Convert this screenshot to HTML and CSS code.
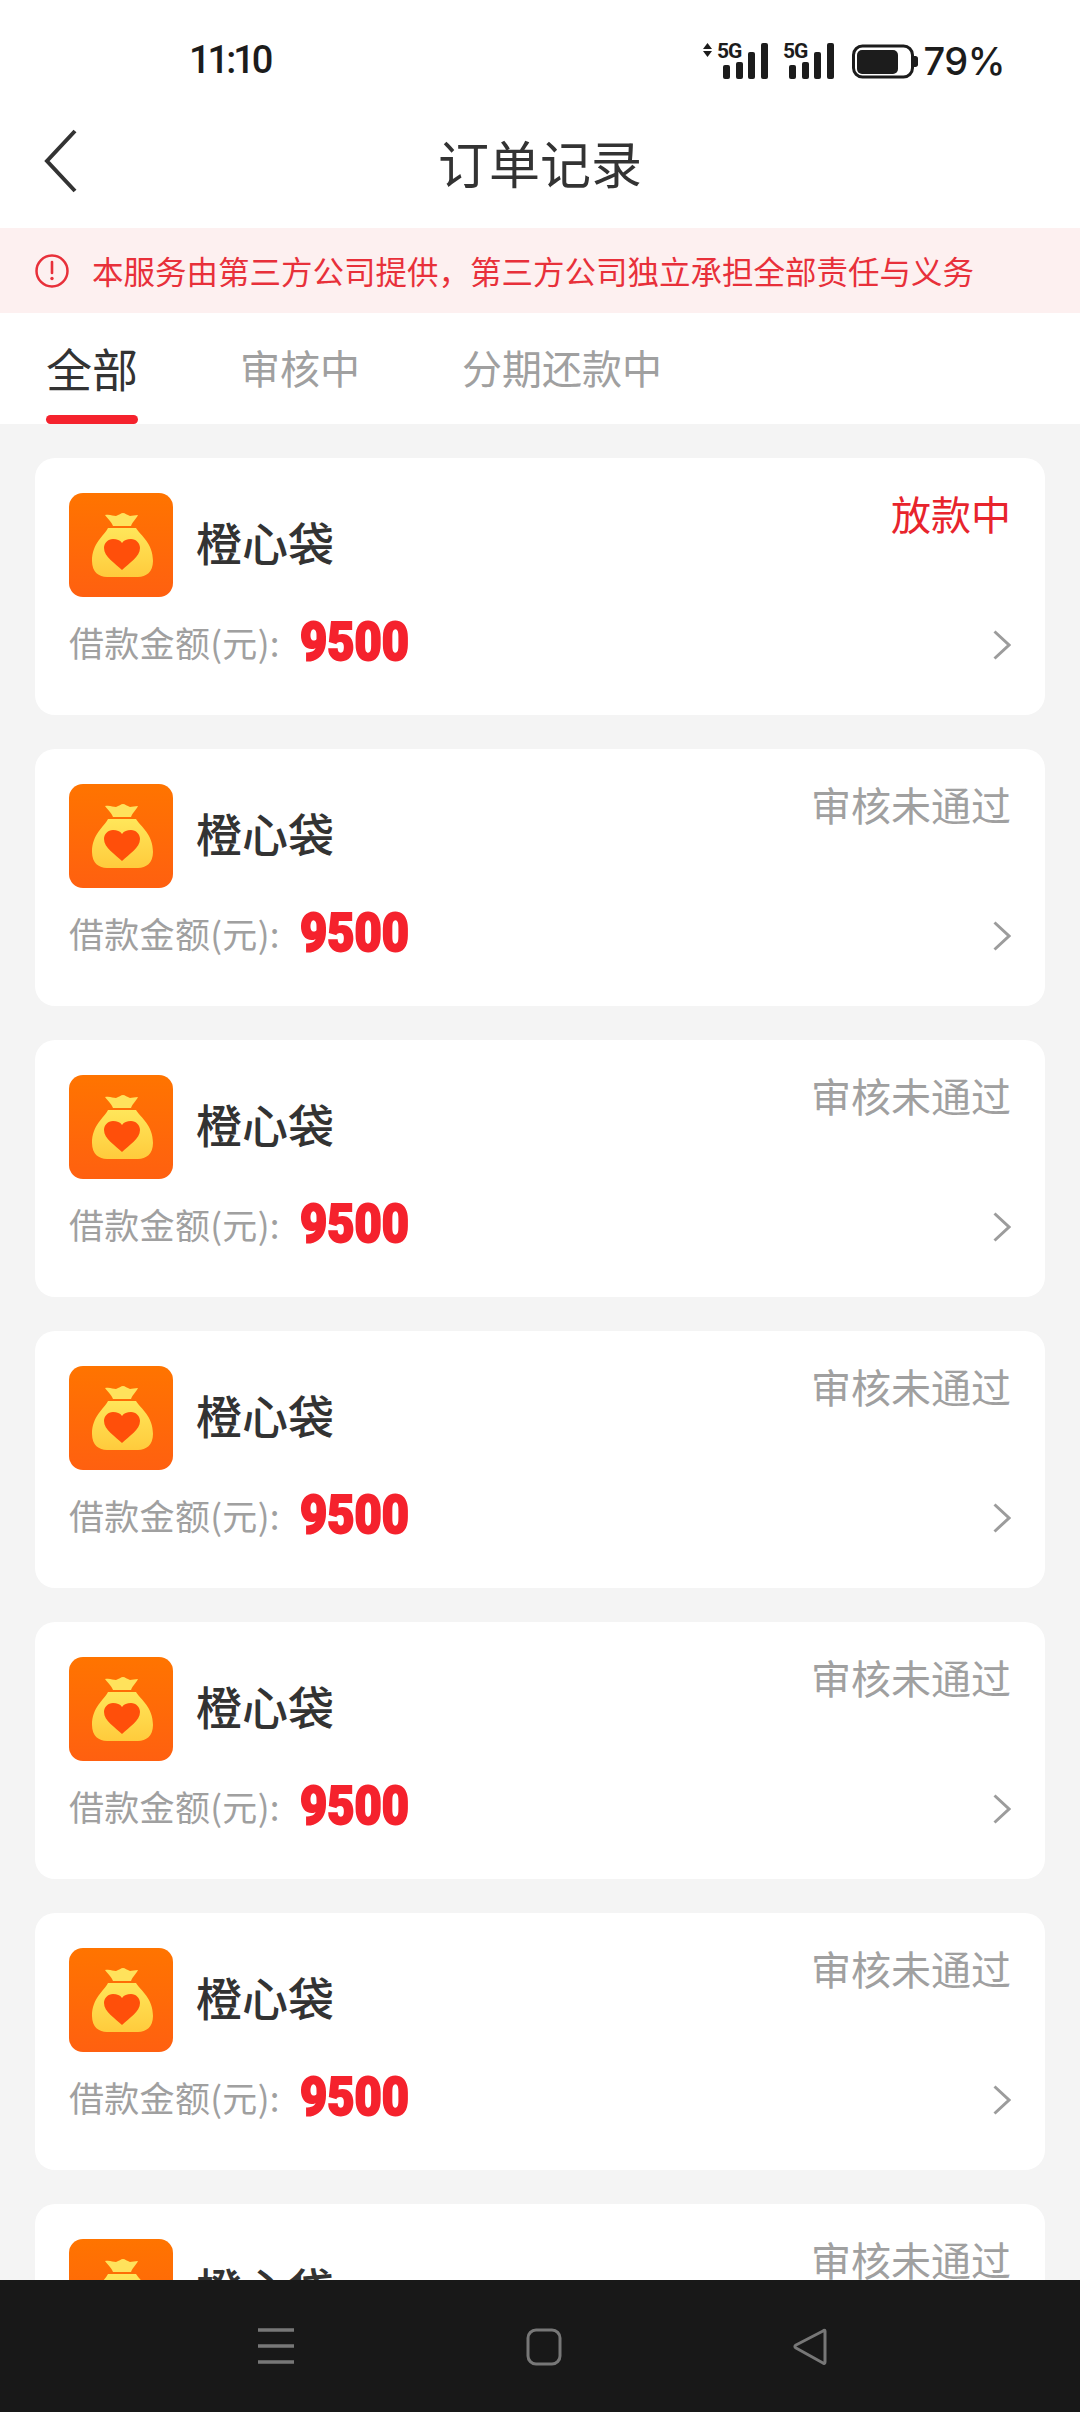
FILE: index.html
```html
<!DOCTYPE html>
<html lang="zh-CN">
<head>
    <meta charset="UTF-8">
    <meta name="viewport" content="width=device-width, initial-scale=1.0">
    <title>订单记录</title>
    <link rel="stylesheet" href="styles.css">
</head>
<body>
    <svg class="defs" width="0" height="0">
        <defs>
            <linearGradient id="bg-grad" x1="0" y1="0" x2="0" y2="1">
                <stop offset="0" stop-color="#ff7400"/>
                <stop offset="1" stop-color="#ff6010"/>
            </linearGradient>
            <linearGradient id="bag-grad" x1="0" y1="0" x2="0" y2="1">
                <stop offset="0" stop-color="#ffe65a"/>
                <stop offset="1" stop-color="#ffcb3c"/>
            </linearGradient>
            <symbol id="bag" viewBox="0 0 104 104">
                <rect width="104" height="104" rx="14" fill="url(#bg-grad)"/>
                <path d="M36 22c5-1 8 1 11 1 3-1 5-3 7-3s4 2 7 3c2 0 5-1 8-1-2 4-5 6-7 11H44c-2-5-5-7-8-11z" fill="#ffe25c"/>
                <path d="M39 35h28c5 8 17 15 17 33 0 11-7 16-15 16H38c-8 0-15-5-15-16 0-18 12-25 16-33z" fill="url(#bag-grad)"/>
                <path d="M53 77C46 70 35 64 35 55c0-5 4-9 9-9 4 0 7 1 9 4 2-3 5-4 9-4 5 0 9 4 9 9 0 9-11 15-18 22z" fill="#ff4f0a"/>
            </symbol>
            <symbol id="chevron" viewBox="0 0 18 30">
                <path d="M1.500 1.500L16 15 1.500 28.500" fill="none" stroke="#9c9c9c" stroke-width="3"/>
            </symbol>
        </defs>
    </svg>

    <div class="phone">
        <!-- barra de estado -->
        <div class="statusbar">
            <span class="time">11:10</span>
            <div class="status-right">
                <svg class="signal" width="220" height="42" viewBox="0 0 220 42">
                    <polygon points="3,6 7.500,0 12,6" fill="#1c1c1c" transform="translate(0,3)"/>
                    <polygon points="3,10 7.500,16 12,10" fill="#1c1c1c" transform="translate(0,1)"/>
                    <text class="g5" x="17" y="18">5G</text>
                    <rect x="23" y="25" width="7" height="14" rx="2" fill="#1c1c1c"/>
                    <rect x="36" y="22" width="7" height="17" rx="2" fill="#1c1c1c"/>
                    <rect x="48" y="12" width="7" height="27" rx="2" fill="#1c1c1c"/>
                    <rect x="61" y="3" width="7" height="36" rx="2" fill="#1c1c1c"/>
                    <text class="g5" x="83" y="18">5G</text>
                    <rect x="89" y="25" width="7" height="14" rx="2" fill="#1c1c1c"/>
                    <rect x="102" y="22" width="7" height="17" rx="2" fill="#1c1c1c"/>
                    <rect x="114" y="12" width="7" height="27" rx="2" fill="#1c1c1c"/>
                    <rect x="127" y="3" width="7" height="36" rx="2" fill="#1c1c1c"/>
                    <rect x="153.500" y="6" width="59" height="31" rx="9" fill="none" stroke="#1c1c1c" stroke-width="3"/>
                    <rect x="157" y="10" width="41" height="24" rx="5" fill="#1c1c1c"/>
                    <path d="M214 16h1.500c1.500 0 2.500 1 2.500 2.500v6c0 1.500-1 2.500-2.500 2.500H214z" fill="#1c1c1c"/>
                </svg>
                <span class="battery-text">79%</span>
            </div>
        </div>

        <!-- cabecera -->
        <div class="header">
            <svg class="back" width="34" height="64" viewBox="0 0 34 64">
                <path d="M31 2L3 32l28 30" fill="none" stroke="#333" stroke-width="4"/>
            </svg>
            <h1 class="title">订单记录</h1>
        </div>

        <div class="notice">
            <svg class="notice-icon" width="36" height="36" viewBox="0 0 36 36">
                <circle cx="18" cy="18" r="15.500" fill="none" stroke="#e8303a" stroke-width="2.500"/>
                <path d="M18 9v11" stroke="#e8303a" stroke-width="2.600" stroke-linecap="round"/>
                <circle cx="18" cy="25.500" r="1.700" fill="#e8303a"/>
            </svg>
            <span>本服务由第三方公司提供，第三方公司独立承担全部责任与义务</span>
        </div>

        <div class="tabs">
            <div class="tab tab-active">全部</div>
            <div class="tab">审核中</div>
            <div class="tab">分期还款中</div>
        </div>

        <!-- lista de pedidos -->
        <div class="list">
            <div class="card">
                <div class="card-head">
                    <svg class="logo"><use href="#bag"/></svg>
                    <span class="name">橙心袋</span>
                </div>
                <div class="state state-red">放款中</div>
                <div class="amount"><span class="amount-label">借款金额(元):</span><span class="amount-num">9500</span></div>
                <svg class="arrow"><use href="#chevron"/></svg>
            </div>
            <div class="card">
                <div class="card-head">
                    <svg class="logo"><use href="#bag"/></svg>
                    <span class="name">橙心袋</span>
                </div>
                <div class="state">审核未通过</div>
                <div class="amount"><span class="amount-label">借款金额(元):</span><span class="amount-num">9500</span></div>
                <svg class="arrow"><use href="#chevron"/></svg>
            </div>
            <div class="card">
                <div class="card-head">
                    <svg class="logo"><use href="#bag"/></svg>
                    <span class="name">橙心袋</span>
                </div>
                <div class="state">审核未通过</div>
                <div class="amount"><span class="amount-label">借款金额(元):</span><span class="amount-num">9500</span></div>
                <svg class="arrow"><use href="#chevron"/></svg>
            </div>
            <div class="card">
                <div class="card-head">
                    <svg class="logo"><use href="#bag"/></svg>
                    <span class="name">橙心袋</span>
                </div>
                <div class="state">审核未通过</div>
                <div class="amount"><span class="amount-label">借款金额(元):</span><span class="amount-num">9500</span></div>
                <svg class="arrow"><use href="#chevron"/></svg>
            </div>
            <div class="card">
                <div class="card-head">
                    <svg class="logo"><use href="#bag"/></svg>
                    <span class="name">橙心袋</span>
                </div>
                <div class="state">审核未通过</div>
                <div class="amount"><span class="amount-label">借款金额(元):</span><span class="amount-num">9500</span></div>
                <svg class="arrow"><use href="#chevron"/></svg>
            </div>
            <div class="card">
                <div class="card-head">
                    <svg class="logo"><use href="#bag"/></svg>
                    <span class="name">橙心袋</span>
                </div>
                <div class="state">审核未通过</div>
                <div class="amount"><span class="amount-label">借款金额(元):</span><span class="amount-num">9500</span></div>
                <svg class="arrow"><use href="#chevron"/></svg>
            </div>
            <div class="card">
                <div class="card-head">
                    <svg class="logo"><use href="#bag"/></svg>
                    <span class="name">橙心袋</span>
                </div>
                <div class="state">审核未通过</div>
                <div class="amount"><span class="amount-label">借款金额(元):</span><span class="amount-num">9500</span></div>
                <svg class="arrow"><use href="#chevron"/></svg>
            </div>
        </div>

        <!-- barra de navegacion -->
        <div class="navbar">
            <svg width="36" height="36" viewBox="0 0 36 36">
                <path d="M0 2h36M0 18h36M0 34h36" stroke="#777" stroke-width="3.500"/>
            </svg>
            <svg width="36" height="38" viewBox="0 0 36 38">
                <rect x="2" y="2" width="32" height="34" rx="8" fill="none" stroke="#777" stroke-width="3"/>
            </svg>
            <svg class="nav-back" width="36" height="38" viewBox="0 0 36 38">
                <path d="M33 3c0-1-1-1-2 0L4 17c-1.500 1-1.500 2 0 3l27 15c1 1 2 .5 2-1z" fill="none" stroke="#777" stroke-width="3" stroke-linejoin="round"/>
            </svg>
        </div>
    </div>
</body>
</html>
```

FILE: styles.css
```css
body {
    margin: 0;
    font-family: "Noto Sans CJK SC", "Noto Sans", sans-serif;
    background: #f4f4f4;
}
.defs {
    display: block;
    height: 0;
}
.phone {
    width: 1080px;
    height: 2412px;
    display: flex;
    flex-direction: column;
    overflow: hidden;
}
.statusbar {
    height: 95px;
    flex-shrink: 0;
    background: #fff;
    display: flex;
    justify-content: space-between;
    align-items: flex-start;
    padding: 0 75px 0 189px;
    box-sizing: border-box;
}
.time {
    margin-top: 36px;
    font-family: Roboto, sans-serif;
    font-size: 38px;
    line-height: 48px;
    font-weight: 500;
    letter-spacing: -3px;
    color: #1c1c1c;
}
.status-right {
    display: flex;
    align-items: flex-start;
    margin-top: 40px;
}
.signal {
    display: block;
}
.g5 {
    font-family: Roboto, sans-serif;
    font-size: 21px;
    font-weight: 700;
    letter-spacing: -1px;
    fill: #1c1c1c;
}
.battery-text {
    margin: -2px 0 0 3px;
    font-family: Inter, Roboto, sans-serif;
    font-size: 38px;
    line-height: 46px;
    font-weight: 500;
    letter-spacing: -.5px;
    color: #1c1c1c;
}
.header {
    height: 133px;
    flex-shrink: 0;
    background: #fff;
    display: grid;
    grid-template-columns: 1fr auto 1fr;
    align-items: center;
    padding: 0 44px;
    box-sizing: border-box;
}
.back {
    display: block;
    margin-top: -1px;
}
.title {
    margin: 0;
    font-size: 51px;
    line-height: 68px;
    font-weight: 400;
    color: #333;
}
.notice {
    height: 85px;
    flex-shrink: 0;
    background: #fdf0f0;
    display: flex;
    align-items: center;
    padding-left: 34px;
    font-size: 31.500px;
    line-height: 44px;
    color: #e8303a;
}
.notice span {
    margin-top: -2px;
}
.notice-icon {
    margin-right: 22px;
}
.tabs {
    height: 111px;
    flex-shrink: 0;
    background: #fff;
    display: flex;
    align-items: flex-start;
    gap: 102px;
    padding-left: 46px;
}
.tab {
    margin-top: 25px;
    font-size: 40px;
    line-height: 58px;
    color: #a0a0a0;
}
.tab-active {
    margin-top: 24px;
    height: 87px;
    display: flex;
    flex-direction: column;
    justify-content: space-between;
    font-size: 46px;
    line-height: 60px;
    color: #333;
}
.tab-active::after {
    content: "";
    height: 9px;
    border-radius: 5px;
    background: #f5222d;
}
.list {
    flex: 1;
    min-height: 0;
    overflow: hidden;
    display: flex;
    flex-direction: column;
    gap: 34px;
    padding: 34px 35px 0;
}
.card {
    height: 257px;
    flex-shrink: 0;
    box-sizing: border-box;
    padding: 35px 34px 0;
    background: #fff;
    border-radius: 20px;
    display: grid;
    grid-template-columns: 1fr auto;
    grid-template-rows: 104px 56px;
    row-gap: 18px;
}
.card-head {
    display: flex;
    align-items: center;
    gap: 23px;
}
.logo {
    width: 104px;
    height: 104px;
    display: block;
}
.name {
    font-size: 46px;
    line-height: 60px;
    margin-top: -8px;
    font-weight: 500;
    color: #333;
}
.state {
    margin-top: -2px;
    font-size: 40px;
    line-height: 44px;
    color: #a0a0a0;
}
.state-red {
    color: #e8242c;
}
.amount {
    display: flex;
    align-items: center;
}
.amount-label {
    margin-top: -3px;
    font-size: 35px;
    letter-spacing: .3px;
    color: #a0a0a0;
    width: 231px;
    white-space: nowrap;
}
.amount-num {
    display: inline-block;
    margin-top: -2px;
    font-family: Roboto, sans-serif;
    font-size: 54px;
    line-height: 56px;
    font-weight: 900;
    color: #f5222d;
    -webkit-text-stroke: 2px #f5222d;
    transform: scaleX(.87);
    transform-origin: left center;
}
.arrow {
    width: 18px;
    height: 30px;
    margin-top: 3px;
    justify-self: end;
    align-self: center;
}
.navbar {
    height: 132px;
    flex-shrink: 0;
    background: #181818;
    display: flex;
    gap: 232px;
    align-items: flex-start;
    padding: 48px 0 0 258px;
    box-sizing: border-box;
}
.nav-back {
    margin-left: -2px;
}
```
